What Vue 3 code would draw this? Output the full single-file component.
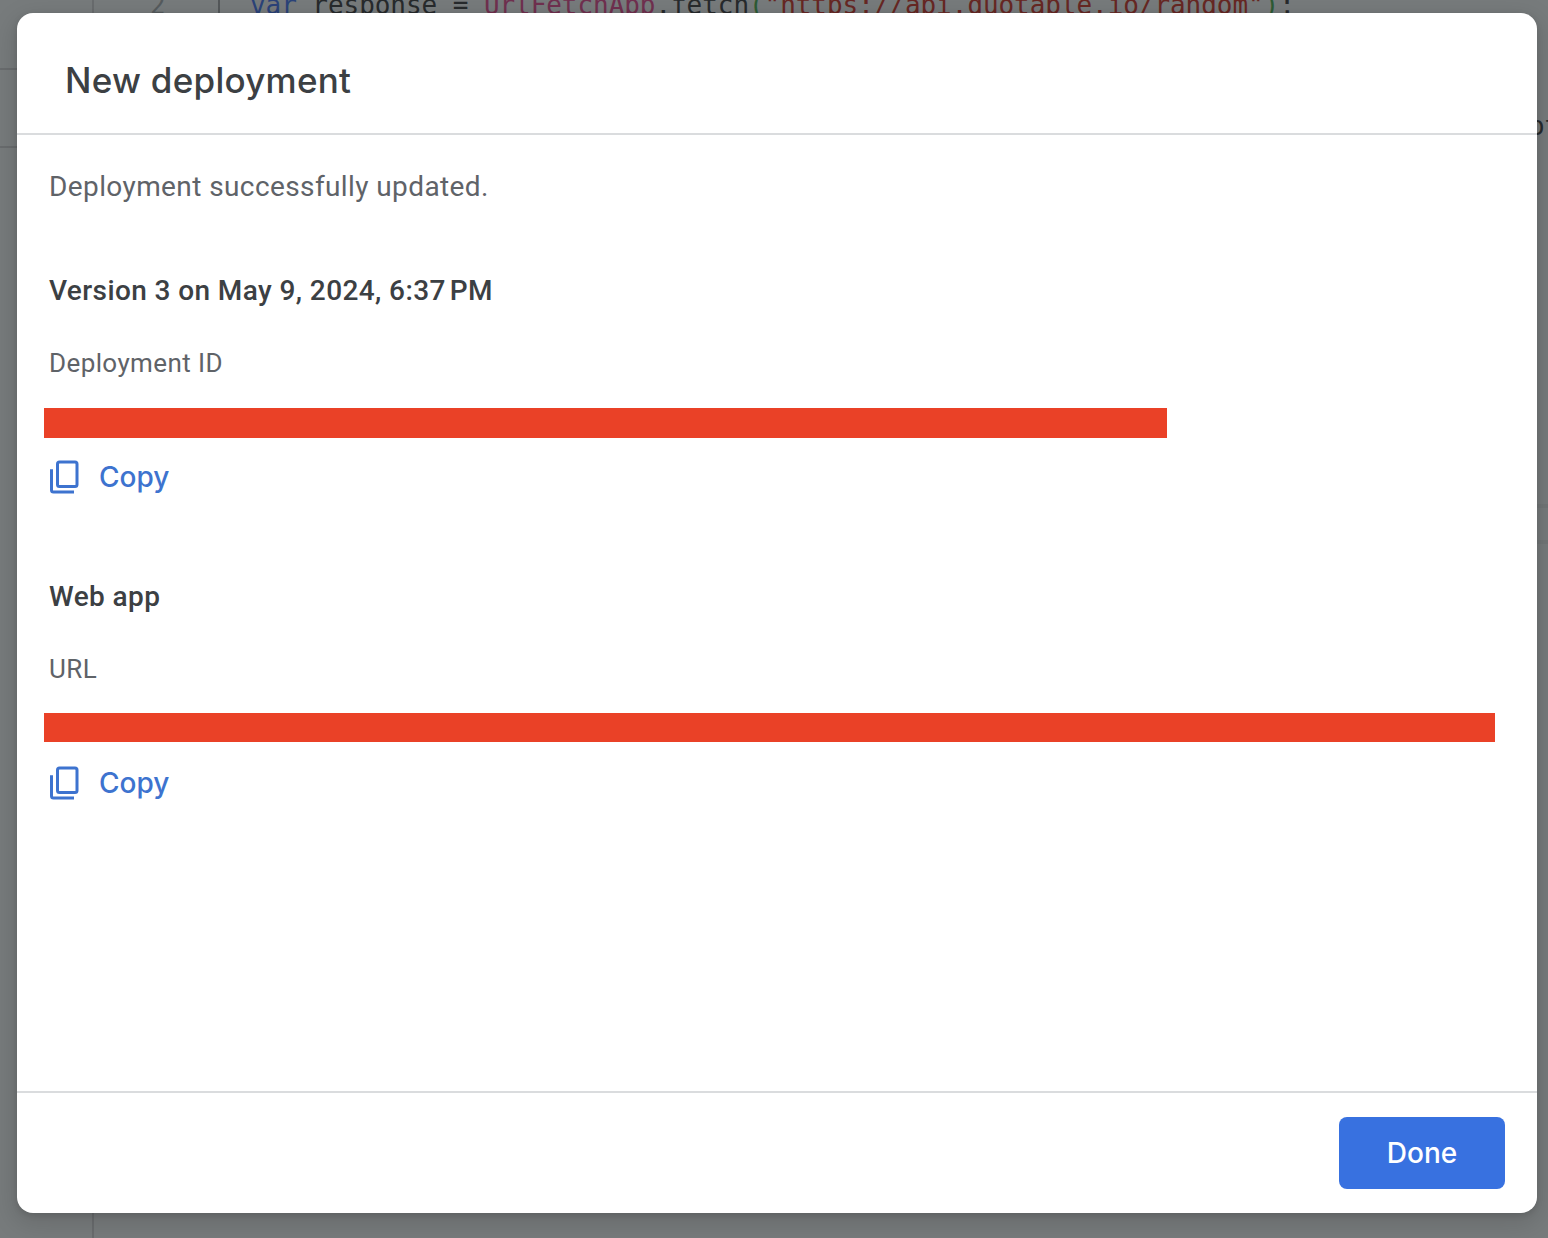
<script setup>
const code = [
  ['kw', 'var'],
  ['id', ' response = '],
  ['cls', 'UrlFetchApp'],
  ['id', '.fetch'],
  ['par', '('],
  ['str', '"https://api.quotable.io/random"'],
  ['par', ')'],
  ['id', ';'],
]
const sections = [
  { title: 'Version 3 on May 9, 2024, 6:37\u202fPM', label: 'Deployment ID', kind: 'id' },
  { title: 'Web app', label: 'URL', kind: 'url' },
]
</script>

<template>
  <div class="page">
    <div class="editor">
      <span class="rule top"></span>
      <span class="rule second"></span>
      <span class="gutter"></span>
      <span class="guide"></span>
      <span class="number">2</span>
      <code class="line"><span v-for="(t, i) in code" :key="i" :class="t[0]">{{ t[1] }}</span></code>
      <span class="clipped">ot</span>
      <span class="band one"></span>
      <span class="band two"></span>
    </div>
    <section class="dialog">
      <header><h1>New deployment</h1></header>
      <main>
        <p class="status">Deployment successfully updated.</p>
        <article v-for="s in sections" :key="s.kind" :class="s.kind">
          <h2>{{ s.title }}</h2>
          <p class="label">{{ s.label }}</p>
          <div class="redacted"></div>
          <button class="copy">
            <svg width="30" height="34" viewBox="0 0 30 34" fill="none" stroke="currentColor" stroke-width="3">
              <rect x="7.5" y="2" width="19.5" height="24.5" rx="2" />
              <path d="M1.5 9.3V30a2 2 0 0 0 2 2H24" />
            </svg>
            <span>Copy</span>
          </button>
        </article>
      </main>
      <footer><button class="done">Done</button></footer>
    </section>
  </div>
</template>

<style>
body { overflow: hidden; }
</style>

<style scoped>
* { box-sizing: border-box; }
.page {
  position: relative;
  display: flex;
  width: 1548px;
  height: 1238px;
  padding: 13px 11px 25px 17px;
  overflow: hidden;
  background: #777b7c;
  font-family: Roboto, sans-serif;
}
.editor, .editor > * { position: absolute; }
.editor { inset: 0; font: 26px/36px "DejaVu Sans Mono", monospace; letter-spacing: -.06px; white-space: pre; color: #272a2c; }
.rule { left: 0; width: 93px; height: 2px; background: #696c6e; }
.rule.top { top: 68px; }
.rule.second { top: 146px; }
.gutter { left: 92px; top: 0; width: 2px; height: 1238px; background: #696c6e; }
.guide { left: 218px; top: 0; width: 2px; height: 40px; background: #54585a; }
.number { left: 150px; top: -13px; color: #565b5e; }
.line { left: 250px; top: -13px; font: inherit; }
.kw { color: #2b4379; }
.cls { color: #70304f; }
.par { color: #2d5b34; }
.str { color: #672723; }
.clipped { left: 1529px; top: 108px; }
.band { right: 0; width: 11px; height: 4px; background: #727677; }
.band.one { top: 504px; }
.band.two { top: 540px; }
.dialog {
  position: relative;
  display: flex;
  flex-direction: column;
  width: 1520px;
  height: 1200px;
  border-radius: 16px;
  background: #fff;
  box-shadow: 0 2px 6px rgba(0, 0, 0, .12), 0 8px 24px 4px rgba(0, 0, 0, .12);
}
header { height: 122px; padding: 43px 48px 0; border-bottom: 2px solid #dadcde; }
h1 { margin: 0; font: 500 35px/48px Inter, sans-serif; letter-spacing: .25px; color: #3c4043; }
main { flex: 1; padding: 32px 27px 0; }
.status { margin: 0 0 64px 5px; font-size: 28px; line-height: 40px; letter-spacing: .4px; color: #5f6368; }
h2 { margin: 0 0 0 5px; font-size: 28px; font-weight: 500; line-height: 40px; letter-spacing: .4px; color: #3c4043; }
.label { margin: 34px 0 0 5px; font-size: 26px; line-height: 36px; letter-spacing: .4px; color: #5f6368; }
.redacted { width: 1123px; height: 30px; margin-top: 27px; background: #ea4127; }
.url .redacted { width: 1451px; height: 29px; margin-top: 26px; }
.copy {
  display: flex;
  align-items: center;
  gap: 19px;
  height: 40px;
  margin: 19px 0 80px 6px;
  padding: 0;
  border: 0;
  background: none;
  color: #3d73cf;
  font: 500 28px/40px Inter, sans-serif;
}
.url .copy { margin-top: 21px; }
footer { display: flex; justify-content: flex-end; height: 122px; padding: 24px 32px; border-top: 2px solid #dadcde; }
.done {
  width: 166px;
  height: 72px;
  padding: 0;
  border: 0;
  border-radius: 8px;
  background: #3871e0;
  color: #fff;
  font: 500 28px/40px Inter, sans-serif;
}
</style>
